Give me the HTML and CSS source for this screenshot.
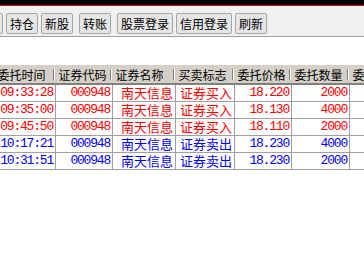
FILE: index.html
```html
<!DOCTYPE html>
<html lang="zh-CN">
<head>
  <meta charset="UTF-8" />
  <title>委托查询</title>
  <link rel="stylesheet" href="styles.css">
</head>
<body>

  <div class="titlebar"></div>

  <!-- 工具栏 -->
  <div class="toolbar">
    <button class="btn btn-cut">撤单</button>
    <button class="btn">持仓</button>
    <button class="btn">新股</button>
    <button class="btn gap">转账</button>
    <button class="btn gap">股票登录</button>
    <button class="btn">信用登录</button>
    <button class="btn">刷新</button>
  </div>

  <!-- 委托列表 -->
  <div class="grid-wrap">
    <table class="grid">
      <colgroup>
        <col class="c1"><col class="c2"><col class="c3"><col class="c4"><col class="c5"><col class="c6"><col class="c7">
      </colgroup>
      <thead>
        <tr>
          <th>委托时间</th>
          <th>证券代码</th>
          <th>证券名称</th>
          <th>买卖标志</th>
          <th>委托价格</th>
          <th>委托数量</th>
          <th>委托编号</th>
        </tr>
      </thead>
      <tbody>
        <tr class="buy">
          <td class="num">09:33:28</td><td class="num">000948</td><td>南天信息</td><td>证券买入</td><td class="num">18.220</td><td class="num">2000</td><td></td>
        </tr>
        <tr class="buy">
          <td class="num">09:35:00</td><td class="num">000948</td><td>南天信息</td><td>证券买入</td><td class="num">18.130</td><td class="num">4000</td><td></td>
        </tr>
        <tr class="buy">
          <td class="num">09:45:50</td><td class="num">000948</td><td>南天信息</td><td>证券买入</td><td class="num">18.110</td><td class="num">2000</td><td></td>
        </tr>
        <tr class="sell">
          <td class="num">10:17:21</td><td class="num">000948</td><td>南天信息</td><td>证券卖出</td><td class="num">18.230</td><td class="num">4000</td><td></td>
        </tr>
        <tr class="sell">
          <td class="num">10:31:51</td><td class="num">000948</td><td>南天信息</td><td>证券卖出</td><td class="num">18.230</td><td class="num">2000</td><td></td>
        </tr>
      </tbody>
    </table>
  </div>

</body>
</html>
```

FILE: styles.css
```css
body {
  margin: 0;
  padding: 0;
  background: #fff;
  font-family: "Noto Sans CJK SC", sans-serif;
  overflow: hidden;
}

.titlebar {
  height: 5px;
  background: #000;
  border-bottom: 1px solid #e00000;
}

.toolbar {
  display: flex;
  gap: 3px;
  padding: 7px 0 2px;
  height: 21px;
  background: #f0f0f0;
  border-bottom: 1px solid #a0a0a0;
  box-shadow: 0 1px 0 #fff;
  overflow: hidden;
}

.btn {
  height: 21px;
  padding: 0 3px;
  margin: 0;
  font-family: "Noto Sans CJK SC", sans-serif;
  font-size: 12px;
  line-height: 19px;
  color: #000;
  background: #e6e6e6;
  border: 1px solid #a6a6a6;
  border-radius: 2px;
}

.btn.gap {
  margin-left: 3px;
}

.btn-cut {
  margin-left: -29px;
  width: 32px;
}

.grid-wrap {
  margin-top: 28px;
  overflow: hidden;
}

.grid {
  margin-left: -6px;
  border-collapse: collapse;
  table-layout: fixed;
  width: 415px;
}

.c1 { width: 61px; }
.c2 { width: 57px; }
.c3 { width: 63px; }
.c4 { width: 59px; }
.c5 { width: 57px; }
.c6 { width: 58px; }
.c7 { width: 60px; }

.grid th {
  height: 18px;
  padding: 0 0 0 3px;
  font-size: 12px;
  font-weight: normal;
  text-align: left;
  white-space: nowrap;
  overflow: hidden;
  color: #000;
  background:
    linear-gradient(#808080, #808080) right 2px center / 1px 11px no-repeat,
    linear-gradient(#fff, #fff) right 1px center / 1px 11px no-repeat,
    #d4d0c8;
  border-bottom: 2px solid #808080;
}

.grid td {
  height: 16px;
  padding: 0 2px 0 0;
  font-size: 13px;
  line-height: 16px;
  text-align: right;
  white-space: nowrap;
  overflow: hidden;
  border: 1px solid #a0a0a0;
  border-top: none;
}

.grid td.num {
  font-family: "Liberation Mono", monospace;
  letter-spacing: -1.2px;
}

.buy td {
  color: #ff0000;
}

.sell td {
  color: #0000ff;
}
```
